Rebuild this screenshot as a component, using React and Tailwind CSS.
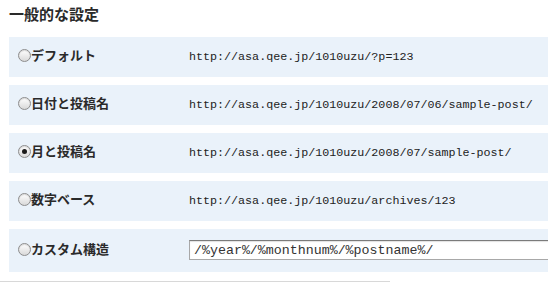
const ROWS = [
  { label: "デフォルト", url: "http://asa.qee.jp/1010uzu/?p=123" },
  { label: "日付と投稿名", url: "http://asa.qee.jp/1010uzu/2008/07/06/sample-post/" },
  { label: "月と投稿名", url: "http://asa.qee.jp/1010uzu/2008/07/sample-post/", checked: true },
  { label: "数字ベース", url: "http://asa.qee.jp/1010uzu/archives/123" },
];

function Radio({ checked }) {
  return (
    <span className="relative flex h-[13px] w-[13px] shrink-0 items-center justify-center rounded-full border border-[#8d8d8d] bg-gradient-to-b from-[#ffffff] to-[#d9d9d9] shadow-[inset_0_1px_1px_rgba(0,0,0,0.15)]">
      {checked && <span className="h-[5px] w-[5px] rounded-full bg-[#1a1a1a]" />}
    </span>
  );
}

function Label({ text, checked }) {
  return (
    <div className="flex w-[180px] shrink-0 items-center pl-[9px]">
      <Radio checked={checked} />
      <span className="text-[13px] font-bold leading-4 text-[#2a2a2a]">{text}</span>
    </div>
  );
}

export default function App() {
  return (
    <div className="h-[282px] w-[548px] overflow-hidden bg-white font-['Noto_Sans_CJK_JP',sans-serif]">
      <h3 className="pl-[9px] pt-[5px] text-[15px] font-bold leading-[18px] text-[#2a2a2a]">
        一般的な設定
      </h3>
      <div className="ml-[9px] mt-[14px] flex w-[620px] flex-col gap-2">
        {ROWS.map((row) => (
          <div key={row.label} className="flex h-10 items-start bg-[#eaf2fa]">
            <div className="pt-[10px]">
              <Label text={row.label} checked={row.checked} />
            </div>
            <div className="pt-[12px] font-['Liberation_Mono',monospace] text-[11.7px] leading-4 text-[#222]">
              {row.url}
            </div>
          </div>
        ))}
        <div className="flex h-[43px] items-start bg-[#eaf2fa]">
          <div className="pt-[12px]">
            <Label text="カスタム構造" />
          </div>
          <input
            readOnly
            value="/%year%/%monthnum%/%postname%/"
            className="mt-[11px] h-5 w-[420px] border border-[#a8a8a8] border-t-[#7b7b7b] bg-white px-[4px] font-['Liberation_Mono',monospace] text-[13.3px] leading-4 text-[#333] outline-none shadow-[inset_0_1px_1px_rgba(0,0,0,0.12)]"
          />
        </div>
      </div>
      <div className="mt-[9px] h-px w-[390px] bg-[#d8d8d8]" />
    </div>
  );
}
